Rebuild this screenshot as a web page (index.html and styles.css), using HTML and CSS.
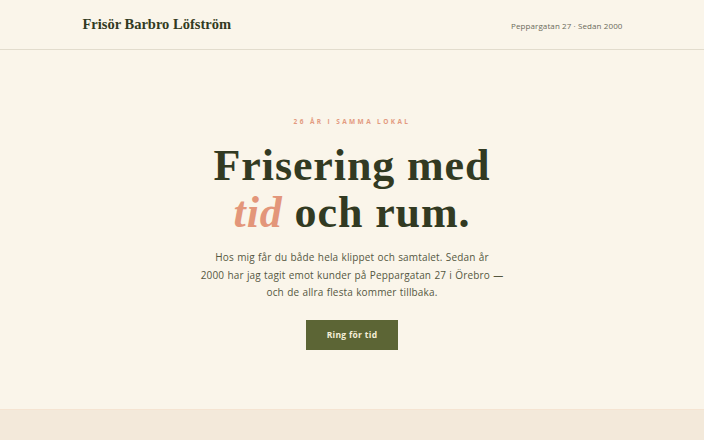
FILE: index.html
```html
<!DOCTYPE html>
<html lang="sv">
<head>
  <meta charset="UTF-8">
  <title>Frisör Barbro Löfström</title>
  <link rel="stylesheet" href="styles.css">
</head>
<body>

  <header class="topbar">
    <div class="wrap topbar-inner">
      <a class="brand" href="#">Frisör Barbro Löfström</a>
      <span class="meta">Peppargatan 27 · Sedan 2000</span>
    </div>
  </header>

  <main>
    <section class="hero">
      <p class="eyebrow">26 år i samma lokal</p>
      <h1>Frisering med<br><em>tid</em> och rum.</h1>
      <p class="lead">Hos mig får du både hela klippet och samtalet. Sedan år<br>2000 har jag tagit emot kunder på Peppargatan 27 i Örebro —<br>och de allra flesta kommer tillbaka.</p>
      <a class="btn" href="#">Ring för tid</a>
    </section>

    <section class="next"></section>
  </main>

</body>
</html>
```

FILE: styles.css
```css
* { box-sizing: border-box; margin: 0; padding: 0; }

body {
  font-family: 'Open Sans', sans-serif;
  background: #faf5ea;
  color: #323a22;
}

a { text-decoration: none; color: inherit; }

.wrap {
  width: 541px;
  margin: 0 auto;
}

/* top bar */
.topbar {
  border-bottom: 1px solid #e2dccd;
}

.topbar-inner {
  height: 49px;
  display: flex;
  align-items: center;
  justify-content: space-between;
}

.brand {
  font-family: 'Liberation Serif', serif;
  font-weight: bold;
  font-size: 14.5px;
  color: #323a22;
  margin-top: -1px;
  margin-left: 1px;
}

.meta {
  font-size: 8px;
  letter-spacing: 0.1px;
  color: #6b6b5c;
  margin-top: 2px;
}

/* hero */
.hero {
  height: 359px;
  display: flex;
  flex-direction: column;
  align-items: center;
  text-align: center;
  padding-top: 67px;
}

.eyebrow {
  font-size: 6.5px;
  font-weight: 700;
  letter-spacing: 2.4px;
  text-transform: uppercase;
  color: #e39a7f;
}

h1 {
  font-family: 'Liberation Serif', serif;
  font-weight: bold;
  font-size: 44px;
  line-height: 47px;
  letter-spacing: 0.9px;
  color: #323a22;
  margin-top: 16px;
}

h1 em {
  color: #e3967a;
  font-style: italic;
}

.lead {
  margin-top: 13px;
  font-size: 10px;
  line-height: 17.5px;
  letter-spacing: 0.15px;
  word-spacing: 0.5px;
  color: #55573f;
}

.btn {
  margin-top: 18px;
  width: 92px;
  height: 30px;
  display: flex;
  align-items: center;
  justify-content: center;
  background: #5c6535;
  color: #f6efd9;
  font-size: 8.5px;
  font-weight: 700;
  letter-spacing: 0.3px;
}

.next {
  height: 40px;
  background: #f3e9da;
  border-top: 1px solid #f5e4d2;
}
```
